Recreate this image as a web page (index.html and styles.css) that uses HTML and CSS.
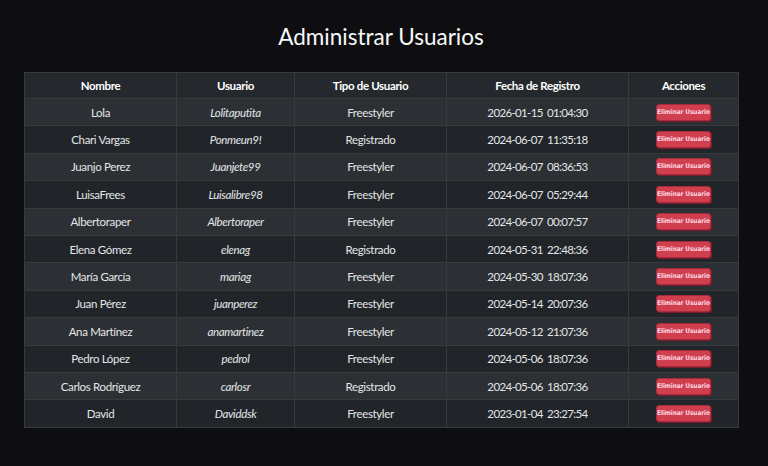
FILE: index.html
```html
<!DOCTYPE html>
<html lang="es">
<head>
<meta charset="utf-8">
<title>Administrar Usuarios</title>
<link rel="stylesheet" href="styles.css">
</head>
<body>
<main class="page">
  <h1 class="title">Administrar Usuarios</h1>
  <table class="users">
    <colgroup>
      <col class="c1"><col class="c2"><col class="c3"><col class="c4"><col class="c5">
    </colgroup>
    <thead>
      <tr><th>Nombre</th><th>Usuario</th><th>Tipo de Usuario</th><th>Fecha de Registro</th><th>Acciones</th></tr>
    </thead>
    <tbody>
      <tr><td>Lola</td><td class="user">Lolitaputita</td><td>Freestyler</td><td class="date">2026-01-15 01:04:30</td><td><button class="del">Eliminar Usuario</button></td></tr>
      <tr><td>Chari Vargas</td><td class="user">Ponmeun9!</td><td>Registrado</td><td class="date">2024-06-07 11:35:18</td><td><button class="del">Eliminar Usuario</button></td></tr>
      <tr><td>Juanjo Perez</td><td class="user">Juanjete99</td><td>Freestyler</td><td class="date">2024-06-07 08:36:53</td><td><button class="del">Eliminar Usuario</button></td></tr>
      <tr><td>LuisaFrees</td><td class="user">Luisalibre98</td><td>Freestyler</td><td class="date">2024-06-07 05:29:44</td><td><button class="del">Eliminar Usuario</button></td></tr>
      <tr><td>Albertoraper</td><td class="user">Albertoraper</td><td>Freestyler</td><td class="date">2024-06-07 00:07:57</td><td><button class="del">Eliminar Usuario</button></td></tr>
      <tr><td>Elena Gómez</td><td class="user">elenag</td><td>Registrado</td><td class="date">2024-05-31 22:48:36</td><td><button class="del">Eliminar Usuario</button></td></tr>
      <tr><td>María García</td><td class="user">mariag</td><td>Freestyler</td><td class="date">2024-05-30 18:07:36</td><td><button class="del">Eliminar Usuario</button></td></tr>
      <tr><td>Juan Pérez</td><td class="user">juanperez</td><td>Freestyler</td><td class="date">2024-05-14 20:07:36</td><td><button class="del">Eliminar Usuario</button></td></tr>
      <tr><td>Ana Martínez</td><td class="user">anamartinez</td><td>Freestyler</td><td class="date">2024-05-12 21:07:36</td><td><button class="del">Eliminar Usuario</button></td></tr>
      <tr><td>Pedro López</td><td class="user">pedrol</td><td>Freestyler</td><td class="date">2024-05-06 18:07:36</td><td><button class="del">Eliminar Usuario</button></td></tr>
      <tr><td>Carlos Rodríguez</td><td class="user">carlosr</td><td>Registrado</td><td class="date">2024-05-06 18:07:36</td><td><button class="del">Eliminar Usuario</button></td></tr>
      <tr><td>David</td><td class="user">Daviddsk</td><td>Freestyler</td><td class="date">2023-01-04 23:27:54</td><td><button class="del">Eliminar Usuario</button></td></tr>
    </tbody>
  </table>
</main>
</body>
</html>
```

FILE: styles.css
```css
* { box-sizing: border-box; }
html, body { margin: 0; padding: 0; }
body {
  background: #0e0e10;
  color: #dee2e6;
  font-family: Lato, "Open Sans", sans-serif;
}
.page {
  padding: 22px 24px 0 24px;
  width: 762px;
}
.title {
  margin: 0 0 20px 0;
  font-weight: 400;
  font-size: 22.5px;
  line-height: 30px;
  text-align: center;
  color: #f8f9fa;
}
.users {
  width: 714px;
  border-collapse: collapse;
  table-layout: fixed;
  font-size: 11.5px;
  letter-spacing: -0.35px;
  border: 1px solid #373b3e;
}
.c1 { width: 152px; }
.c2 { width: 118px; }
.c3 { width: 152px; }
.c4 { width: 182px; }
.c5 { width: 110px; }
.users th, .users td {
  text-align: center;
  vertical-align: middle;
  border: 1px solid #373b3e;
  padding: 0 4px;
}
.users th {
  height: 26px;
  font-weight: 700;
  color: #ffffff;
  background: #25282c;
}
.users td {
  height: 27.4px;
  color: #e4e6e8;
}
.users tbody tr:nth-child(odd) td { background: #2c3034; }
.users tbody tr:nth-child(even) td { background: #212529; }
.users td.user { font-style: italic; }
.users td.date { letter-spacing: -0.65px; word-spacing: 2px; }
.del {
  display: inline-block;
  width: 55px;
  height: 17px;
  padding: 0;
  border: 1px solid #a52b3a;
  border-radius: 3px;
  background: #cf3f4d;
  color: #ffd6e2;
  font-family: "DejaVu Sans Condensed", "DejaVu Sans", sans-serif;
  font-stretch: condensed;
  font-weight: 700;
  font-size: 6.5px;
  line-height: 15px;
  letter-spacing: -0.1px;
  vertical-align: middle;
  box-shadow: 1px 1px 0 #7a1a2e;
}
```
